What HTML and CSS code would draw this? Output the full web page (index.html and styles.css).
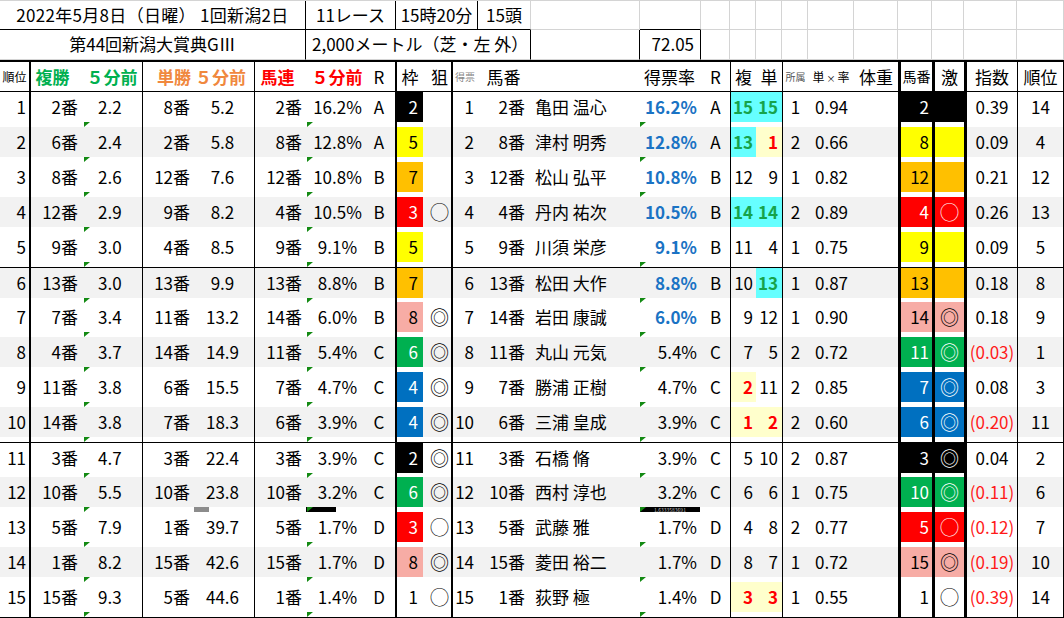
FILE: index.html
```html
<!DOCTYPE html>
<html lang="ja">
<head>
<meta charset="utf-8">
<title>新潟大賞典</title>
<link rel="stylesheet" href="styles.css">
</head>
<body>
<div class="sheet">
  <div class="top1">
    <div class="t kr kb tc wide-text">2022年5月8日（日曜） 1回新潟2日</div>
    <div class="t kr kb tc">11レース</div>
    <div class="t kr kb tc">15時20分</div>
    <div class="t kb tc">15頭</div>
    <div class="t"></div>
    <div class="t kb"></div>
    <div class="t"></div><div class="t"></div><div class="t"></div><div class="t"></div><div class="t"></div>
    <div class="t"></div><div class="t"></div><div class="t"></div><div class="t"></div><div class="t"></div>
  </div>
  <div class="top2">
    <div class="t kr tc">第44回新潟大賞典GⅢ</div>
    <div class="t kr tl">2,000メートル（芝・左 外）</div>
    <div class="t kr"></div>
    <div class="t kr tr">72.05</div>
    <div class="t"></div><div class="t"></div><div class="t"></div><div class="t"></div><div class="t"></div>
    <div class="t"></div><div class="t"></div><div class="t"></div><div class="t"></div><div class="t"></div>
  </div>
  <div class="hdr">
    <div class="h-a">順位</div>
    <div class="h-fuku">複勝　５分前</div>
    <div class="h-tan">単勝 ５分前</div>
    <div class="h-ren">馬連　５分前</div>
    <div class="h-r">R</div>
    <div class="h-waku">枠</div>
    <div class="h-ner">狙</div>
    <div class="h-tokuhyo">得票</div>
    <div class="h-umaban">馬番</div>
    <div></div>
    <div class="h-rate">得票率</div>
    <div class="h-r2">R</div>
    <div class="h-fk">複</div>
    <div class="h-tn">単</div>
    <div class="h-sho">所属</div>
    <div class="h-tx">単<span class="small-x">×</span>率</div>
    <div class="h-wt">体重</div>
    <div class="h-ub">馬番</div>
    <div class="h-geki">激</div>
    <div class="h-idx">指数</div>
    <div class="h-rank">順位</div>
  </div>

  <div class="row">
    <div class="ca">1</div><div class="cb">2番</div><div class="cc mk">2.2</div><div class="cd">8番</div><div class="ce">5.2</div><div class="cf">2番</div><div class="cg mk">16.2%</div><div class="ch">A</div><div class="ci f2">2</div><div class="cj"></div><div class="ck">1</div><div class="cl">2番</div><div class="cm">亀田 温心</div><div class="cn mk blue">16.2%</div><div class="co">A</div><div class="cp cy">15</div><div class="cq cy">15</div><div class="cr">1</div><div class="cs">0.94</div><div class="ct"></div><div class="cu f2">2</div><div class="cv f2"></div><div class="cw">0.39</div><div class="cx">14</div>
  </div>
  <div class="row alt">
    <div class="ca">2</div><div class="cb">6番</div><div class="cc mk">2.4</div><div class="cd">2番</div><div class="ce">5.8</div><div class="cf">8番</div><div class="cg mk">12.8%</div><div class="ch">A</div><div class="ci f5">5</div><div class="cj"></div><div class="ck">2</div><div class="cl">8番</div><div class="cm">津村 明秀</div><div class="cn mk blue">12.8%</div><div class="co">A</div><div class="cp cy">13</div><div class="cq ly">1</div><div class="cr">2</div><div class="cs">0.66</div><div class="ct"></div><div class="cu f5">8</div><div class="cv f5"></div><div class="cw">0.09</div><div class="cx">4</div>
  </div>
  <div class="row">
    <div class="ca">3</div><div class="cb">8番</div><div class="cc mk">2.6</div><div class="cd">12番</div><div class="ce">7.6</div><div class="cf">12番</div><div class="cg mk">10.8%</div><div class="ch">B</div><div class="ci f7">7</div><div class="cj"></div><div class="ck">3</div><div class="cl">12番</div><div class="cm">松山 弘平</div><div class="cn mk blue">10.8%</div><div class="co">B</div><div class="cp">12</div><div class="cq">9</div><div class="cr">1</div><div class="cs">0.82</div><div class="ct"></div><div class="cu f7">12</div><div class="cv f7"></div><div class="cw">0.21</div><div class="cx">12</div>
  </div>
  <div class="row alt">
    <div class="ca">4</div><div class="cb">12番</div><div class="cc mk">2.9</div><div class="cd">9番</div><div class="ce">8.2</div><div class="cf">4番</div><div class="cg mk">10.5%</div><div class="ch">B</div><div class="ci f3">3</div><div class="cj">◯</div><div class="ck">4</div><div class="cl">4番</div><div class="cm">丹内 祐次</div><div class="cn blue">10.5%</div><div class="co">B</div><div class="cp cy">14</div><div class="cq cy">14</div><div class="cr">2</div><div class="cs">0.89</div><div class="ct"></div><div class="cu f3">4</div><div class="cv f3">◯</div><div class="cw">0.26</div><div class="cx">13</div>
  </div>
  <div class="row">
    <div class="ca">5</div><div class="cb">9番</div><div class="cc mk">3.0</div><div class="cd">4番</div><div class="ce">8.5</div><div class="cf">9番</div><div class="cg mk">9.1%</div><div class="ch">B</div><div class="ci f5">5</div><div class="cj"></div><div class="ck">5</div><div class="cl">9番</div><div class="cm">川須 栄彦</div><div class="cn mk blue">9.1%</div><div class="co">B</div><div class="cp">11</div><div class="cq">4</div><div class="cr">1</div><div class="cs">0.75</div><div class="ct"></div><div class="cu f5">9</div><div class="cv f5"></div><div class="cw">0.09</div><div class="cx">5</div>
  </div>

  <div class="row alt sep">
    <div class="ca">6</div><div class="cb">13番</div><div class="cc mk">3.0</div><div class="cd">13番</div><div class="ce">9.9</div><div class="cf">13番</div><div class="cg mk">8.8%</div><div class="ch">B</div><div class="ci f7">7</div><div class="cj"></div><div class="ck">6</div><div class="cl">13番</div><div class="cm">松田 大作</div><div class="cn mk blue">8.8%</div><div class="co">B</div><div class="cp">10</div><div class="cq cy">13</div><div class="cr">1</div><div class="cs">0.87</div><div class="ct"></div><div class="cu f7">13</div><div class="cv f7"></div><div class="cw">0.18</div><div class="cx">8</div>
  </div>
  <div class="row">
    <div class="ca">7</div><div class="cb">7番</div><div class="cc mk">3.4</div><div class="cd">11番</div><div class="ce">13.2</div><div class="cf">14番</div><div class="cg mk">6.0%</div><div class="ch">B</div><div class="ci f8">8</div><div class="cj">◎</div><div class="ck">7</div><div class="cl">14番</div><div class="cm">岩田 康誠</div><div class="cn mk blue">6.0%</div><div class="co">B</div><div class="cp">9</div><div class="cq">12</div><div class="cr">1</div><div class="cs">0.90</div><div class="ct"></div><div class="cu f8">14</div><div class="cv f8">◎</div><div class="cw">0.18</div><div class="cx">9</div>
  </div>
  <div class="row alt">
    <div class="ca">8</div><div class="cb">4番</div><div class="cc mk">3.7</div><div class="cd">14番</div><div class="ce">14.9</div><div class="cf">11番</div><div class="cg mk">5.4%</div><div class="ch">C</div><div class="ci f6">6</div><div class="cj">◎</div><div class="ck">8</div><div class="cl">11番</div><div class="cm">丸山 元気</div><div class="cn mk">5.4%</div><div class="co">C</div><div class="cp">7</div><div class="cq">5</div><div class="cr">2</div><div class="cs">0.72</div><div class="ct"></div><div class="cu f6">11</div><div class="cv f6">◎</div><div class="cw neg">(0.03)</div><div class="cx">1</div>
  </div>
  <div class="row">
    <div class="ca">9</div><div class="cb">11番</div><div class="cc mk">3.8</div><div class="cd">6番</div><div class="ce">15.5</div><div class="cf">7番</div><div class="cg mk">4.7%</div><div class="ch">C</div><div class="ci f4">4</div><div class="cj">◎</div><div class="ck">9</div><div class="cl">7番</div><div class="cm">勝浦 正樹</div><div class="cn mk">4.7%</div><div class="co">C</div><div class="cp ly">2</div><div class="cq">11</div><div class="cr">2</div><div class="cs">0.85</div><div class="ct"></div><div class="cu f4">7</div><div class="cv f4">◎</div><div class="cw">0.08</div><div class="cx">3</div>
  </div>
  <div class="row alt">
    <div class="ca">10</div><div class="cb">14番</div><div class="cc mk">3.8</div><div class="cd">7番</div><div class="ce">18.3</div><div class="cf">6番</div><div class="cg mk">3.9%</div><div class="ch">C</div><div class="ci f4">4</div><div class="cj">◎</div><div class="ck">10</div><div class="cl">6番</div><div class="cm">三浦 皇成</div><div class="cn mk">3.9%</div><div class="co">C</div><div class="cp ly">1</div><div class="cq ly">2</div><div class="cr">2</div><div class="cs">0.60</div><div class="ct"></div><div class="cu f4">6</div><div class="cv f4">◎</div><div class="cw neg">(0.20)</div><div class="cx">11</div>
  </div>

  <div class="row sep">
    <div class="ca">11</div><div class="cb">3番</div><div class="cc mk">4.7</div><div class="cd">3番</div><div class="ce">22.4</div><div class="cf">3番</div><div class="cg mk">3.9%</div><div class="ch">C</div><div class="ci f2">2</div><div class="cj">◎</div><div class="ck">11</div><div class="cl">3番</div><div class="cm">石橋 脩</div><div class="cn mk">3.9%</div><div class="co">C</div><div class="cp">5</div><div class="cq">10</div><div class="cr">2</div><div class="cs">0.87</div><div class="ct"></div><div class="cu f2">3</div><div class="cv f2">◎</div><div class="cw">0.04</div><div class="cx">2</div>
  </div>
  <div class="row alt">
    <div class="ca">12</div><div class="cb">10番</div><div class="cc mk">5.5</div><div class="cd">10番</div><div class="ce">23.8<span class="gbar"></span></div><div class="cf">10番</div><div class="cg mk">3.2%<span class="kbar"></span></div><div class="ch">C</div><div class="ci f6">6</div><div class="cj">◎</div><div class="ck">12</div><div class="cl">10番</div><div class="cm">西村 淳也</div><div class="cn mk">3.2%<span class="kbar wide">1.6333583691</span></div><div class="co">C</div><div class="cp">6</div><div class="cq">6</div><div class="cr">1</div><div class="cs">0.75</div><div class="ct"></div><div class="cu f6">10</div><div class="cv f6">◎</div><div class="cw neg">(0.11)</div><div class="cx">6</div>
  </div>
  <div class="row">
    <div class="ca">13</div><div class="cb">5番</div><div class="cc mk">7.9</div><div class="cd">1番</div><div class="ce">39.7</div><div class="cf">5番</div><div class="cg mk">1.7%</div><div class="ch">D</div><div class="ci f3">3</div><div class="cj">◯</div><div class="ck">13</div><div class="cl">5番</div><div class="cm">武藤 雅</div><div class="cn mk">1.7%</div><div class="co">D</div><div class="cp">4</div><div class="cq">8</div><div class="cr">2</div><div class="cs">0.77</div><div class="ct"></div><div class="cu f3">5</div><div class="cv f3">◯</div><div class="cw neg">(0.12)</div><div class="cx">7</div>
  </div>
  <div class="row alt">
    <div class="ca">14</div><div class="cb">1番</div><div class="cc mk">8.2</div><div class="cd">15番</div><div class="ce">42.6</div><div class="cf">15番</div><div class="cg mk">1.7%</div><div class="ch">D</div><div class="ci f8">8</div><div class="cj">◎</div><div class="ck">14</div><div class="cl">15番</div><div class="cm">菱田 裕二</div><div class="cn mk">1.7%</div><div class="co">D</div><div class="cp">8</div><div class="cq">7</div><div class="cr">1</div><div class="cs">0.72</div><div class="ct"></div><div class="cu f8">15</div><div class="cv f8">◎</div><div class="cw neg">(0.19)</div><div class="cx">10</div>
  </div>
  <div class="row last">
    <div class="ca">15</div><div class="cb">15番</div><div class="cc mk">9.3</div><div class="cd">5番</div><div class="ce">44.6</div><div class="cf">1番</div><div class="cg mk">1.4%</div><div class="ch">D</div><div class="ci f1">1</div><div class="cj">◯</div><div class="ck">15</div><div class="cl">1番</div><div class="cm">荻野 極</div><div class="cn mk">1.4%</div><div class="co">D</div><div class="cp ly">3</div><div class="cq ly">3</div><div class="cr">1</div><div class="cs">0.55</div><div class="ct"></div><div class="cu f1">1</div><div class="cv f1">◯</div><div class="cw neg">(0.39)</div><div class="cx">14</div>
  </div>
</div>
</body>
</html>
```

FILE: styles.css
```css
* { box-sizing: border-box; }

body {
  margin: 0;
  background: #fff;
  color: #000;
  font-family: "Noto Sans CJK JP", "Noto Sans", sans-serif;
}

.sheet {
  width: 1064px;
}

/* ---------- top info rows ---------- */
.top1, .top2 {
  display: grid;
  height: 30px;
  font-size: 17px;
  line-height: 28px;
}

.top1 {
  grid-template-columns: 306px 90px 82px 53px 109px 61px 29px 26px 26px 26px 46px 44px 34px 32px 53px 47px;
  border-top: 1px solid #d4d4d4;
}

.top2 {
  grid-template-columns: 306px 225px 109px 61px 29px 26px 26px 26px 46px 44px 34px 32px 53px 47px;
}

.t {
  border-right: 1px solid #d4d4d4;
  border-bottom: 1px solid #d4d4d4;
  white-space: nowrap;
}

.t.kr { border-right-color: #000; }
.t.kb { border-bottom-color: #000; }
.tc { text-align: center; }
.tl { text-align: left; padding-left: 6px; }
.tr { text-align: right; padding-right: 6px; }
.wide-text { letter-spacing: 0.3px; }

/* ---------- header row ---------- */
.hdr {
  display: grid;
  grid-template-columns: 29px 55px 58px 54px 58px 53px 61px 27px 28px 28px 26px 53px 110px 61px 29px 26px 26px 26px 46px 44px 34px 32px 53px 47px;
  height: 32px;
  border-top: 2px solid #000;
  border-bottom: 1px solid #000;
  font-size: 17px;
  line-height: 29px;
  white-space: nowrap;
}

.h-a { font-size: 12px; text-align: center; }
.h-fuku { grid-column: span 2; border-left: 2px solid #000; text-align: center; color: #00b050; font-weight: bold; }
.h-tan { grid-column: span 2; border-left: 1px solid #000; text-align: center; padding-left: 6px; color: #f0883e; font-weight: bold; }
.h-ren { grid-column: span 2; border-left: 1px solid #000; text-align: center; color: #ff0000; font-weight: bold; }
.h-r { text-align: center; padding-right: 5px; }
.h-waku { border-left: 2px solid #000; text-align: center; }
.h-ner { text-align: center; padding-left: 5px; }
.h-tokuhyo { border-left: 2px solid #000; text-align: center; font-size: 10px; color: #8a8a8a; }
.h-umaban { text-align: center; }
.h-rate { text-align: right; padding-right: 6px; }
.h-r2 { text-align: center; }
.h-fk { border-left: 1px solid #000; text-align: center; }
.h-tn { text-align: center; }
.h-sho { border-left: 1px solid #000; text-align: center; font-size: 10px; color: #555; }
.h-tx { text-align: center; font-size: 12px; }
.small-x { font-size: 9px; padding: 0 2px; }
.h-wt { text-align: center; }
.h-ub { border-left: 3px solid #000; text-align: center; font-size: 14px; }
.h-geki { border-left: 3px solid #000; text-align: center; }
.h-idx { border-left: 3px solid #000; text-align: center; }
.h-rank { border-left: 1px solid #000; border-right: 1px solid #000; text-align: center; }

/* ---------- data rows ---------- */
.row {
  --bg: transparent;
  display: grid;
  grid-template-columns: 29px 55px 58px 54px 58px 53px 61px 27px 28px 28px 26px 53px 110px 61px 29px 26px 26px 26px 46px 44px 34px 32px 53px 47px;
  height: 35px;
  font-size: 17px;
  line-height: 29px;
  white-space: nowrap;
}

.row.alt { --bg: #f2f2f2; }
.row.sep { border-top: 1px solid #000; }
.row.last { height: 36px; border-bottom: 1px solid #000; }

.row > div {
  position: relative;
  background-image: linear-gradient(var(--bg), var(--bg));
  background-size: 100% 30px;
  background-repeat: no-repeat;
}

.ca { text-align: right; padding-right: 3px; }
.cb { text-align: right; padding-right: 6px; border-left: 2px solid #000; }
.cc { padding-left: 14px; }
.cd { text-align: right; padding-right: 6px; border-left: 1px solid #000; }
.ce { text-align: center; padding-right: 5px; }
.cf { text-align: right; padding-right: 5px; border-left: 1px solid #000; }
.cg { text-align: center; }
.ch { text-align: center; padding-right: 5px; }
.ci { text-align: right; padding-right: 5px; border-left: 2px solid #000; }
.cj { text-align: center; padding-left: 5px; font-size: 19px; line-height: 29px; }
.ck { text-align: right; padding-right: 3px; border-left: 2px solid #000; }
.cl { text-align: right; padding-right: 5px; }
.cm { padding-left: 5px; }
.cn { text-align: right; padding-right: 4px; }
.co { text-align: center; }
.cp { text-align: right; padding-right: 3px; border-left: 1px solid #000; }
.cq { text-align: right; padding-right: 4px; }
.cr { text-align: center; border-left: 1px solid #000; }
.cs { padding-left: 7px; }
.cu { text-align: right; padding-right: 3px; border-left: 3px solid #000; }
.cv { text-align: center; border-left: 3px solid #000; font-size: 19px; line-height: 29px; }
.cw { text-align: center; border-left: 3px solid #000; }
.cx { text-align: center; border-left: 1px solid #000; border-right: 1px solid #000; }

/* text styles */
.blue { color: #1a73c4; font-weight: bold; }
.neg { color: #ff1a1a; }
.cy { --bg: #66ffff; color: #16a34a; font-weight: bold; }
.ly { --bg: #ffffcc; color: #ff0000; font-weight: bold; }

/* frame colours */
.f1 { --bg: #ffffff; }
.f2 { --bg: #000000; color: #fff; }
.f3 { --bg: #ff0000; color: #fff; }
.f4 { --bg: #0070c0; color: #fff; }
.f5 { --bg: #ffff00; }
.f6 { --bg: #00b050; color: #fff; }
.f7 { --bg: #ffc000; }
.f8 { --bg: #f7aca5; }

/* green error-indicator triangles */
.mk::before {
  content: "";
  position: absolute;
  left: 0;
  top: 30px;
  width: 6px;
  height: 5px;
  background: #138a13;
  clip-path: polygon(0 0, 100% 0, 0 100%);
  z-index: 2;
}

/* small bars in the spacer strip of row 12 */
.gbar {
  position: absolute;
  left: -2px;
  top: 30px;
  width: 15px;
  height: 5px;
  background: #8c8c8c;
}

.kbar {
  position: absolute;
  left: -1px;
  top: 30px;
  width: 30px;
  height: 5px;
  background: #000;
  font-size: 5px;
  line-height: 5px;
  color: #bbb;
  overflow: hidden;
  text-align: left;
  font-weight: normal;
}

.kbar.wide {
  left: 0;
  width: 60px;
  padding-left: 14px;
}
```
